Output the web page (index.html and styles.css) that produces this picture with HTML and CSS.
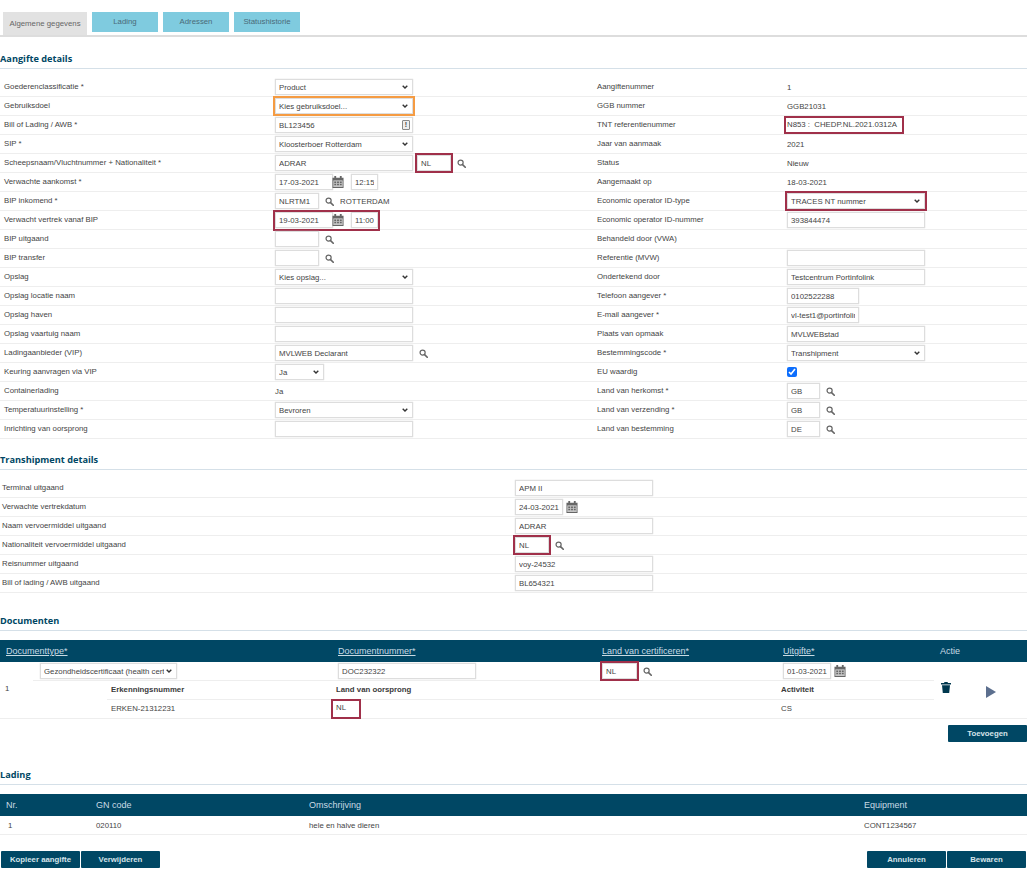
FILE: index.html
```html
<!DOCTYPE html>
<html lang="nl">
<head>
  <meta charset="UTF-8">
  <title>Aangifte</title>
  <link rel="stylesheet" href="styles.css">
</head>
<body>
  <svg class="sprite" xmlns="http://www.w3.org/2000/svg">
    <symbol id="i-search" viewBox="0 0 12 12">
      <circle cx="4.8" cy="4.8" r="3.4" fill="none" stroke="currentColor" stroke-width="1.6"/>
      <path d="M7.4 7.4L11 11" stroke="currentColor" stroke-width="2.2" stroke-linecap="round"/>
    </symbol>
    <symbol id="i-cal" viewBox="0 0 12 13">
      <rect x="1" y="5" width="10" height="7" fill="#c4c4c4"/>
      <path fill="currentColor" d="M2 0h2v2h4V0h2v2h2v11H0V2h2zM1 5v7h10V5z"/>
      <path fill="currentColor" d="M2 6h2v1.5H2zM5 6h2v1.5H5zM8 6h2v1.5H8zM2 8.5h2V10H2zM5 8.5h2V10H5zM8 8.5h2V10H8z"/>
    </symbol>
    <symbol id="i-trash" viewBox="0 0 10 11">
      <path fill="currentColor" d="M3.5 0h3l.5 1h3v1.4H0V1h3zM1 3.2h8L8.2 11H1.8z"/>
    </symbol>
  </svg>

  <nav class="tabs">
    <a class="tab active">Algemene gegevens</a>
    <a class="tab">Lading</a>
    <a class="tab">Adressen</a>
    <a class="tab">Statushistorie</a>
  </nav>

  <h2>Aangifte details</h2>
  <div class="rows">
    <div class="row">
      <label>Goederenclassificatie *</label>
      <div class="val"><select class="w138"><option>Product</option></select></div>
      <label>Aangiftenummer</label>
      <div class="val">1</div>
    </div>
    <div class="row">
      <label>Gebruiksdoel</label>
      <div class="val"><select class="w138 hl-orange"><option>Kies gebruiksdoel...</option></select></div>
      <label>GGB nummer</label>
      <div class="val">GGB21031</div>
    </div>
    <div class="row">
      <label>Bill of Lading / AWB *</label>
      <div class="val">
        <span class="with-icon">
          <input class="w138" value="BL123456">
          <span class="in-icon">!</span>
        </span>
      </div>
      <label>TNT referentienummer</label>
      <div class="val"><span class="tnt">N853 :&nbsp; CHEDP.NL.2021.0312A</span></div>
    </div>
    <div class="row">
      <label>SIP *</label>
      <div class="val"><select class="w138"><option>Kloosterboer Rotterdam</option></select></div>
      <label>Jaar van aanmaak</label>
      <div class="val">2021</div>
    </div>
    <div class="row">
      <label>Scheepsnaam/Vluchtnummer + Nationaliteit *</label>
      <div class="val">
        <input class="w138" value="ADRAR">
        <input class="w34 hl-red" value="NL">
        <svg class="ico search"><use href="#i-search"/></svg>
      </div>
      <label>Status</label>
      <div class="val">Nieuw</div>
    </div>
    <div class="row">
      <label>Verwachte aankomst *</label>
      <div class="val">
        <span class="datetime">
          <input class="w58" value="17-03-2021">
          <svg class="ico cal"><use href="#i-cal"/></svg>
          <input class="w27" value="12:15">
        </span>
      </div>
      <label>Aangemaakt op</label>
      <div class="val">18-03-2021</div>
    </div>
    <div class="row">
      <label>BIP inkomend *</label>
      <div class="val">
        <input class="w44" value="NLRTM1">
        <svg class="ico search"><use href="#i-search"/></svg>
        <span class="port">ROTTERDAM</span>
      </div>
      <label>Economic operator ID-type</label>
      <div class="val"><select class="w138 hl-red"><option>TRACES NT nummer</option></select></div>
    </div>
    <div class="row">
      <label>Verwacht vertrek vanaf BIP</label>
      <div class="val">
        <span class="datetime hl-red">
          <input class="w58" value="19-03-2021">
          <svg class="ico cal"><use href="#i-cal"/></svg>
          <input class="w27" value="11:00">
        </span>
      </div>
      <label>Economic operator ID-nummer</label>
      <div class="val"><input class="w138" value="393844474"></div>
    </div>
    <div class="row">
      <label>BIP uitgaand</label>
      <div class="val">
        <input class="w44">
        <svg class="ico search"><use href="#i-search"/></svg>
      </div>
      <label>Behandeld door (VWA)</label>
      <div class="val"></div>
    </div>
    <div class="row">
      <label>BIP transfer</label>
      <div class="val">
        <input class="w44">
        <svg class="ico search"><use href="#i-search"/></svg>
      </div>
      <label>Referentie (MVW)</label>
      <div class="val"><input class="w138"></div>
    </div>
    <div class="row">
      <label>Opslag</label>
      <div class="val"><select class="w138"><option>Kies opslag...</option></select></div>
      <label>Ondertekend door</label>
      <div class="val"><input class="w138" value="Testcentrum Portinfolink"></div>
    </div>
    <div class="row">
      <label>Opslag locatie naam</label>
      <div class="val"><input class="w138"></div>
      <label>Telefoon aangever *</label>
      <div class="val"><input class="w72" value="0102522288"></div>
    </div>
    <div class="row">
      <label>Opslag haven</label>
      <div class="val"><input class="w138"></div>
      <label>E-mail aangever *</label>
      <div class="val"><input class="w72" value="vl-test1@portinfolink.nl"></div>
    </div>
    <div class="row">
      <label>Opslag vaartuig naam</label>
      <div class="val"><input class="w138"></div>
      <label>Plaats van opmaak</label>
      <div class="val"><input class="w138" value="MVLWEBstad"></div>
    </div>
    <div class="row">
      <label>Ladingaanbieder (VIP)</label>
      <div class="val">
        <input class="w138" value="MVLWEB Declarant">
        <svg class="ico search"><use href="#i-search"/></svg>
      </div>
      <label>Bestemmingscode *</label>
      <div class="val"><select class="w138"><option>Transhipment</option></select></div>
    </div>
    <div class="row">
      <label>Keuring aanvragen via VIP</label>
      <div class="val"><select class="w49"><option>Ja</option></select></div>
      <label>EU waardig</label>
      <div class="val"><input type="checkbox" class="check" checked></div>
    </div>
    <div class="row">
      <label>Containerlading</label>
      <div class="val">Ja</div>
      <label>Land van herkomst *</label>
      <div class="val">
        <input class="w33" value="GB">
        <svg class="ico search"><use href="#i-search"/></svg>
      </div>
    </div>
    <div class="row">
      <label>Temperatuurinstelling *</label>
      <div class="val"><select class="w138"><option>Bevroren</option></select></div>
      <label>Land van verzending *</label>
      <div class="val">
        <input class="w33" value="GB">
        <svg class="ico search"><use href="#i-search"/></svg>
      </div>
    </div>
    <div class="row">
      <label>Inrichting van oorsprong</label>
      <div class="val"><input class="w138"></div>
      <label>Land van bestemming</label>
      <div class="val">
        <input class="w33" value="DE">
        <svg class="ico search"><use href="#i-search"/></svg>
      </div>
    </div>
  </div>

  <h2 class="second">Transhipment details</h2>
  <div class="rows">
    <div class="row-wide"><label>Terminal uitgaand</label><div class="val"><input class="w138" value="APM II"></div></div>
    <div class="row-wide">
      <label>Verwachte vertrekdatum</label>
      <div class="val">
        <input class="w48" value="24-03-2021">
        <svg class="ico cal"><use href="#i-cal"/></svg>
      </div>
    </div>
    <div class="row-wide"><label>Naam vervoermiddel uitgaand</label><div class="val"><input class="w138" value="ADRAR"></div></div>
    <div class="row-wide">
      <label>Nationaliteit vervoermiddel uitgaand</label>
      <div class="val">
        <input class="w34 hl-red" value="NL">
        <svg class="ico search"><use href="#i-search"/></svg>
      </div>
    </div>
    <div class="row-wide"><label>Reisnummer uitgaand</label><div class="val"><input class="w138" value="voy-24532"></div></div>
    <div class="row-wide"><label>Bill of lading / AWB uitgaand</label><div class="val"><input class="w138" value="BL654321"></div></div>
  </div>

  <h2 class="third">Documenten</h2>
  <div class="doc-head">
    <a>Documenttype*</a>
    <a>Documentnummer*</a>
    <a>Land van certificeren*</a>
    <a>Uitgifte*</a>
    <span>Actie</span>
  </div>
  <div class="doc-body">
    <div class="doc-nr">1</div>
    <div class="doc-main">
      <div class="doc-row">
        <div class="doc-type"><select class="w137"><option>Gezondheidscertificaat (health certificate)</option></select></div>
        <div><input class="w138" value="DOC232322"></div>
        <div>
          <input class="w35 hl-red" value="NL">
          <svg class="ico search"><use href="#i-search"/></svg>
        </div>
        <div>
          <input class="w48" value="01-03-2021">
          <svg class="ico cal"><use href="#i-cal"/></svg>
        </div>
      </div>
      <div class="sub-row">
        <b>Erkenningsnummer</b>
        <b>Land van oorsprong</b>
        <b>Activiteit</b>
      </div>
      <div class="sub-row last">
        <span>ERKEN-21312231</span>
        <span class="nl-box">NL</span>
        <span>CS</span>
      </div>
    </div>
    <div class="doc-actions">
      <svg class="trash"><use href="#i-trash"/></svg>
      <span class="play"></span>
    </div>
  </div>
  <div class="add-bar"><button>Toevoegen</button></div>

  <h2 class="fourth">Lading</h2>
  <div class="lading-head">
    <span>Nr.</span><span>GN code</span><span>Omschrijving</span><span>Equipment</span>
  </div>
  <div class="lading-row">
    <span>1</span><span>020110</span><span>hele en halve dieren</span><span>CONT1234567</span>
  </div>

  <div class="footer">
    <div class="btns"><button>Kopieer aangifte</button><button>Verwijderen</button></div>
    <div class="btns"><button>Annuleren</button><button>Bewaren</button></div>
  </div>
</body>
</html>
```

FILE: styles.css
```css
* {
  box-sizing: border-box;
}
body {
  margin: 0;
  width: 1027px;
  font-family: "Liberation Sans", Arial, sans-serif;
  font-size: 7.8px;
  color: #444;
  background: #fff;
}
.sprite {
  display: none;
}

/* tabs */
.tabs {
  display: flex;
  align-items: flex-start;
  gap: 5px;
  height: 37px;
  padding: 12px 0 0 3px;
  border-bottom: 2px solid #ddd;
}
.tab {
  width: 66px;
  height: 20px;
  line-height: 19px;
  text-align: center;
  color: #4a6a78;
  background: #7fcbdf;
}
.tab.active {
  width: 84px;
  height: 23px;
  line-height: 23px;
  color: #666;
  background: #e2e2e2;
}

/* section titles */
h2 {
  margin: 13px 0 9px;
  height: 19px;
  padding: 2px 0 0 0;
  font-family: "Open Sans", sans-serif;
  font-size: 9.2px;
  line-height: 13px;
  font-weight: 700;
  color: #004764;
  border-bottom: 1px solid #d5e0e8;
}
h2.second {
  margin-top: 12px;
}
h2.third {
  margin: 19px 0 9px;
}
h2.fourth {
  margin: 24px 0 9px;
}

/* form rows */
.row, .row-wide {
  display: grid;
  height: 19px;
  align-items: center;
  border-bottom: 1px solid #eee;
}
.row {
  grid-template-columns: 275px 322px 190px 1fr;
}
.row-wide {
  grid-template-columns: 515px 1fr;
}
.row label {
  padding-left: 4px;
  margin-top: -2px;
}
.row label:nth-of-type(2) {
  padding-left: 0;
}
.row-wide label {
  padding-left: 2px;
  margin-top: -2px;
}
.val {
  display: flex;
  align-items: center;
  height: 18px;
}

input, select {
  height: 16px;
  padding: 0 3px;
  border: 1px solid #ddd;
  border-radius: 0;
  background: #fff;
  color: #444;
  font-family: inherit;
  font-size: 7.8px;
  box-shadow: 0 0 1px #ccc;
}
select {
  appearance: none;
  padding-right: 12px;
  background: #fff url("data:image/svg+xml,%3Csvg xmlns='http://www.w3.org/2000/svg' width='6' height='4'%3E%3Cpath d='M.7.7L3 3l2.3-2.3' fill='none' stroke='%23333' stroke-width='1.4'/%3E%3C/svg%3E") no-repeat right 4px center;
}
.w27 { width: 27px; }
.w33 { width: 33px; }
.w34 { width: 34px; }
.w35 { width: 35px; }
.w44 { width: 44px; }
.w48 { width: 48px; }
.w49 { width: 49px; }
.w58 { width: 58px; }
.w72 { width: 72px; }
.w137 { width: 137px; }
.w138 { width: 138px; }

.hl-red {
  outline: 2px solid #a0304a;
}
.hl-orange {
  outline: 2px solid #f59b42;
}

.w138 + .w34 {
  margin-left: 4px;
}
.tnt {
  margin-left: -2px;
  padding: 2px 6px 2px 2px;
  height: 16px;
  line-height: 12px;
  outline: 2px solid #a0304a;
  outline-offset: -1px;
  white-space: nowrap;
}
.port {
  margin-left: 6px;
}
.check {
  width: 10px;
  height: 10px;
  margin: 0;
  box-shadow: none;
  accent-color: #0d6efd;
}

/* icons */
.ico {
  flex: none;
}
.ico.search {
  width: 9px;
  height: 9px;
  margin-left: 6px;
  color: #666;
}
.ico.cal {
  width: 12px;
  height: 12px;
  margin: 0 7px 0 -1px;
  color: #666;
}
.w48 + .ico.cal {
  margin: 0 0 0 3px;
}
.datetime {
  display: inline-flex;
  align-items: center;
  height: 17px;
}
.with-icon {
  position: relative;
  display: inline-flex;
}
.in-icon {
  position: absolute;
  top: 3px;
  right: 3px;
  width: 8px;
  height: 10px;
  border: 1px solid #888;
  border-radius: 1px;
  background: #eee;
  font-size: 7px;
  font-weight: 700;
  line-height: 8px;
  text-align: center;
}

/* documents */
.doc-head, .lading-head {
  display: grid;
  height: 22px;
  align-items: center;
  background: #004764;
  color: #c9dbe4;
  font-size: 9px;
}
.doc-head {
  grid-template-columns: 338px 264px 181px 157px 1fr;
}
.doc-head a {
  text-decoration: underline;
}
.doc-head a:first-child, .lading-head span:first-child {
  padding-left: 6px;
}
.doc-body {
  display: flex;
  height: 57px;
  border-bottom: 1px solid #eee;
}
.doc-nr {
  width: 33px;
  padding: 22px 0 0 5px;
}
.doc-main {
  width: 901px;
}
.doc-row {
  display: grid;
  grid-template-columns: 305px 264px 181px 1fr;
  align-items: center;
  height: 19px;
  border-bottom: 1px solid #eee;
}
.doc-row > div {
  display: flex;
  align-items: center;
}
.doc-type {
  padding-left: 7px;
}
.sub-row {
  display: grid;
  grid-template-columns: 225px 445px 1fr;
  align-items: center;
  height: 19px;
  margin-left: 74px;
  padding-left: 4px;
  border-bottom: 1px solid #eee;
}
.sub-row > * {
  margin-top: -2px;
}
.sub-row.last {
  border-bottom: 0;
  height: 18px;
}
.sub-row.last > .nl-box {
  margin-top: 0;
}
.sub-row b {
  color: #3a3a3a;
}
.nl-box {
  width: 28px;
  height: 18px;
  margin-left: -4px;
  padding-left: 4px;
  line-height: 16px;
  outline: 2px solid #a0304a;
  outline-offset: -1px;
}
.doc-actions {
  position: relative;
  flex: 1;
}
.trash {
  position: absolute;
  left: 7px;
  top: 20px;
  width: 10px;
  height: 11px;
  color: #00384f;
}
.play {
  position: absolute;
  left: 52px;
  top: 24px;
  border-left: 10px solid #5c6f8e;
  border-top: 6px solid transparent;
  border-bottom: 6px solid transparent;
}

button {
  height: 17px;
  border: 0;
  border-radius: 1px;
  background: #004764;
  color: #d6e4ea;
  font-family: inherit;
  font-size: 7.8px;
  font-weight: 700;
  width: 79px;
  padding: 0;
}
.add-bar {
  display: flex;
  justify-content: flex-end;
  margin-top: 6px;
}

/* lading table */
.lading-head, .lading-row {
  grid-template-columns: 96px 213px 555px 1fr;
}
.lading-row {
  display: grid;
  align-items: center;
  height: 19px;
  border-bottom: 1px solid #eee;
}
.lading-row span:first-child {
  padding-left: 8px;
}
.footer {
  display: flex;
  justify-content: space-between;
  margin-top: 16px;
  padding: 0 1px;
}
.btns {
  display: flex;
  gap: 1px;
}
```
